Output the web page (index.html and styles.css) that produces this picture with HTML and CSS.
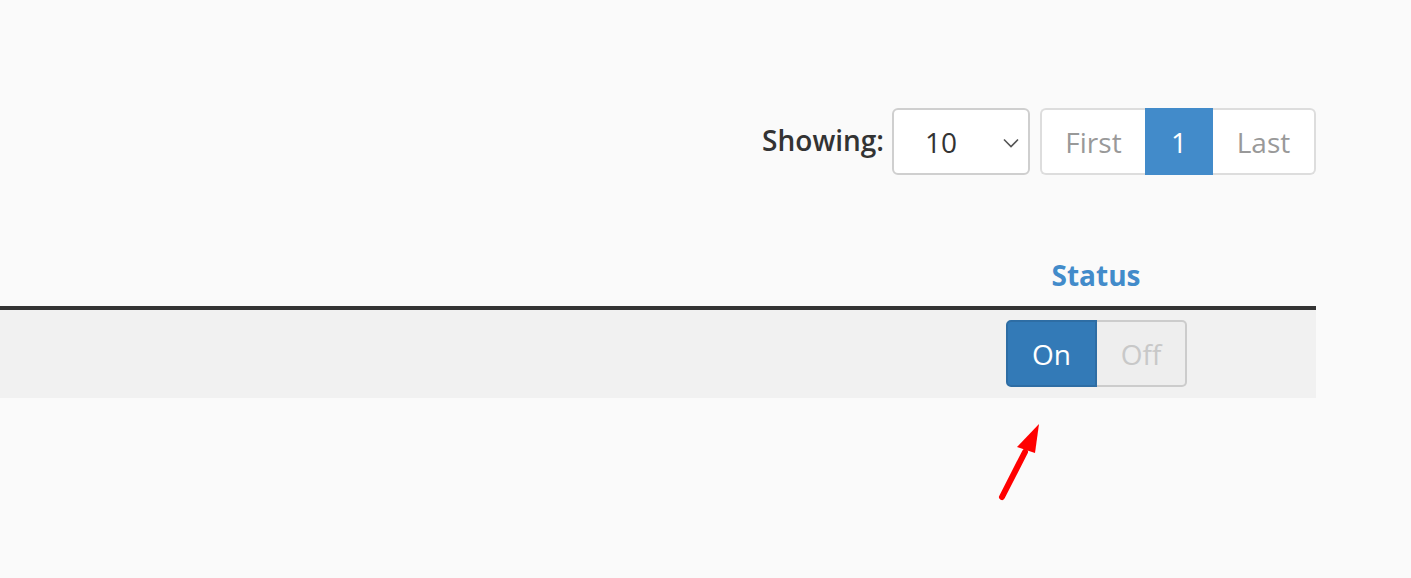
FILE: index.html
```html
<!DOCTYPE html>
<html>
<head>
<meta charset="utf-8">
<link rel="stylesheet" href="styles.css">
</head>
<body>
<div class="page">
  <div class="toolbar">
    <span class="label">Showing:</span>
    <div class="select">
      <span class="select-value">10</span>
      <svg class="chevron" width="16" height="10" viewBox="0 0 16 10"><path d="M1 1.5 L8 8.5 L15 1.5" fill="none" stroke="#555" stroke-width="1.6"/></svg>
    </div>
    <div class="pager">
      <span class="pg pg-first">First</span>
      <span class="pg pg-active">1</span>
      <span class="pg pg-last">Last</span>
    </div>
  </div>
  <table class="grid">
    <thead>
      <tr><th class="col-main"></th><th class="col-status">Status</th></tr>
    </thead>
    <tbody>
      <tr>
        <td class="col-main"></td>
        <td class="col-status">
          <div class="toggle">
            <span class="tg tg-on">On</span>
            <span class="tg tg-off">Off</span>
          </div>
        </td>
      </tr>
    </tbody>
  </table>
  <svg class="arrow" width="60" height="90" viewBox="0 0 60 90">
    <line x1="12" y1="82" x2="35" y2="37" stroke="#ff0000" stroke-width="6" stroke-linecap="round"/>
    <polygon points="49,9 27,32 45,38" fill="#ff0000"/>
  </svg>
</div>
</body>
</html>
```
FILE: styles.css
```css
html, body {
  margin: 0;
  padding: 0;
  background: #fafafa;
}
body {
  font-family: "Open Sans", "Liberation Sans", sans-serif;
  color: #333;
  font-size: 28px;
}
.page {
  width: 1316px;
  position: relative;
  height: 578px;
}
.toolbar {
  display: flex;
  justify-content: flex-end;
  align-items: center;
  padding-top: 108px;
  height: 67px;
}
.label {
  font-weight: 600;
  color: #333;
  line-height: 40px;
  margin-right: 8px;
  position: relative;
  top: -2px;
}
.select {
  box-sizing: border-box;
  width: 138px;
  height: 67px;
  border: 2px solid #cfcfcf;
  border-radius: 6px;
  background: #fff;
  display: flex;
  align-items: center;
  justify-content: space-between;
  padding: 0 9px 0 31px;
  margin-right: 10px;
}
.select-value {
  line-height: 40px;
  color: #333;
}
.chevron {
  display: block;
  margin-top: 2px;
}
.pager {
  display: flex;
  height: 67px;
}
.pg {
  box-sizing: border-box;
  height: 67px;
  display: flex;
  align-items: center;
  justify-content: center;
  line-height: 40px;
  color: #999;
  background: #fff;
}
.pg-first {
  width: 105px;
  border: 2px solid #ddd;
  border-right: none;
  border-radius: 6px 0 0 6px;
}
.pg-active {
  width: 68px;
  background: #428bca;
  color: #fff;
}
.pg-last {
  width: 103px;
  border: 2px solid #ddd;
  border-left: none;
  border-radius: 0 6px 6px 0;
}
.grid {
  width: 1316px;
  margin-top: 64px;
  border-collapse: separate;
  border-spacing: 0;
}
.grid th {
  padding: 16px 0 11px;
  line-height: 40px;
  border-bottom: 4px solid #333;
  font-weight: 700;
  color: #428bca;
}
.grid td {
  background: #f1f1f1;
  padding: 10px 0 11px;
  height: 67px;
}
.col-status {
  width: 440px;
  text-align: center;
}
.toggle {
  display: inline-flex;
  vertical-align: top;
  margin-left: 1px;
}
.tg {
  box-sizing: border-box;
  height: 67px;
  display: flex;
  align-items: center;
  justify-content: center;
  line-height: 40px;
}
.tg-on {
  width: 91px;
  background: #337ab7;
  border: 2px solid #2e6da4;
  border-radius: 5px 0 0 5px;
  color: #fff;
}
.tg-off {
  width: 90px;
  background: #eee;
  border: 2px solid #ccc;
  border-left: none;
  border-radius: 0 5px 5px 0;
  color: #c8c8c8;
}
.arrow {
  position: absolute;
  left: 990px;
  top: 415px;
}
```
